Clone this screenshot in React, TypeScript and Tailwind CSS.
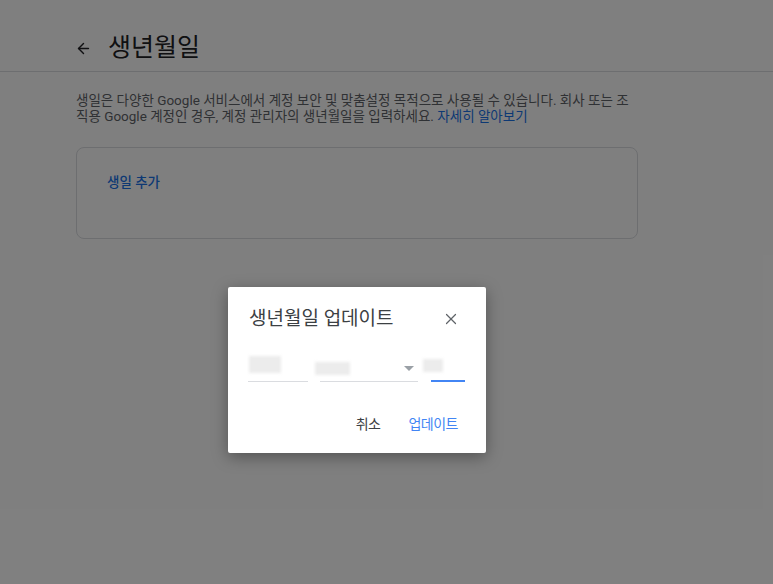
import React from 'react';
import { ArrowLeft, X } from 'lucide-react';

const font = { fontFamily: 'Roboto, "Noto Sans CJK KR", "Noto Sans", sans-serif' };

const Redacted = ({ className }: { className: string }) => (
  <div className={`bg-[#ececec] blur-[1.5px] ${className}`} />
);

const BirthdayDialog: React.FC = () => (
  <div className="absolute left-[228px] top-[287px] w-[258px] h-[166px] bg-white rounded-[2px] shadow-[0_4px_16px_rgba(0,0,0,0.35)] flex flex-col">
    <div className="flex items-center justify-between pl-[21px] pr-[26px] pt-[19px]">
      <h2 className="text-[19px] leading-[26px] text-[#3c4043]">생년월일 업데이트</h2>
      <X size={18} strokeWidth={1.6} className="text-[#5f6368]" />
    </div>

    <div className="flex items-end pl-[20px] mt-[24px] h-[26px]">
      <div className="w-[60px] h-full flex flex-col justify-between">
        <Redacted className="w-[32px] h-[17px] ml-[1px]" />
        <div className="h-px bg-[#dadce0]" />
      </div>
      <div className="w-[98px] h-full ml-[12px] flex flex-col justify-between">
        <div className="flex items-center justify-between h-[20px] pt-[4px]">
          <Redacted className="w-[35px] h-[13px] -ml-[5px]" />
          <div className="w-0 h-0 border-l-[5px] border-r-[5px] border-t-[5px] border-l-transparent border-r-transparent border-t-[#9aa0a6] mr-[4px]" />
        </div>
        <div className="h-px bg-[#dadce0]" />
      </div>
      <div className="w-[34px] h-full ml-[13px] flex flex-col justify-between">
        <Redacted className="w-[20px] h-[13px] -ml-[8px] mt-[3px]" />
        <div className="h-[2px] bg-[#4285f4]" />
      </div>
    </div>

    <div className="flex justify-end items-center gap-[12px] pr-[20px] mt-auto mb-[15px]">
      <button className="px-[8px] h-[28px] text-[14px] tracking-[-0.5px] text-[#3c4043]">취소</button>
      <button className="px-[8px] h-[28px] text-[14px] tracking-[-0.5px] text-[#4285f4]">업데이트</button>
    </div>
  </div>
);

export default function App() {
  return (
    <div className="relative w-[773px] h-[584px] bg-white overflow-hidden" style={font}>
      <header className="flex items-end h-[72px] pl-[75px] pb-[7px] border-b border-[#dadce0]">
        <div className="flex items-center h-[32px]">
          <ArrowLeft size={17} strokeWidth={2} className="text-[#202124]" />
          <h1 className="ml-[16px] text-[25px] leading-[32px] text-[#202124]">생년월일</h1>
        </div>
      </header>

      <main className="pl-[76px] w-[638px] pt-[20px]">
        <p className="text-[13.5px] leading-[16px] text-[#5f6368]">
          생일은 다양한 Google 서비스에서 계정 보안 및 맞춤설정 목적으로 사용될 수 있습니다. 회사 또는 조직용 Google 계정인 경우, 계정 관리자의 생년월일을 입력하세요.{' '}
          <a className="text-[#1a73e8]">자세히 알아보기</a>
        </p>

        <div className="mt-[23px] w-[562px] h-[92px] border border-[#dadce0] rounded-[8px] pl-[30px] pt-[22px]">
          <span className="text-[13.5px] leading-[20px] font-medium text-[#1a73e8]">생일 추가</span>
        </div>
      </main>

      <div className="absolute inset-0 bg-black/50" />
      <BirthdayDialog />
    </div>
  );
}
